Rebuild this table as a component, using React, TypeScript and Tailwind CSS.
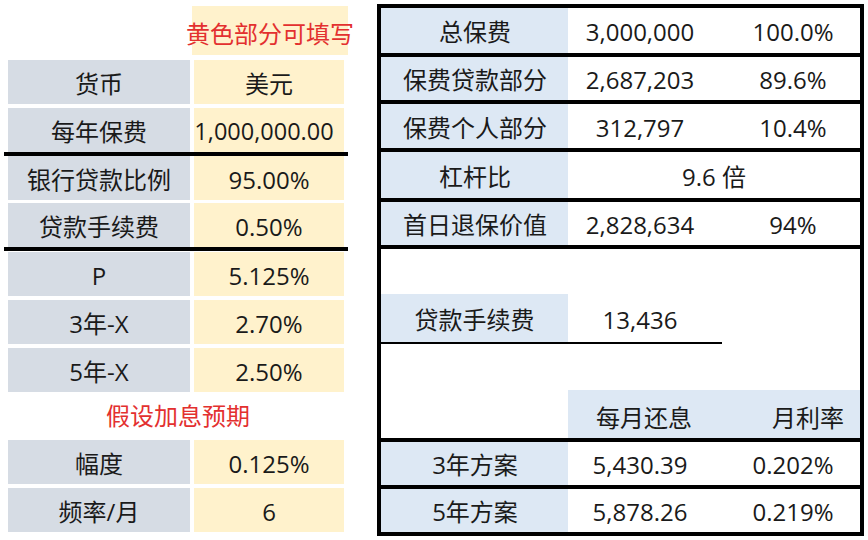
import React from "react";

const FONT = { fontFamily: "'Open Sans', 'Noto Sans CJK SC', sans-serif" };

function LRow({ label, value, valueClass = "" }: { label: string; value: string; valueClass?: string }) {
  return (
    <div className="flex h-[44px] gap-[4px]">
      <div className="flex w-[182px] items-center justify-center bg-[#d6dce4] pt-[3px]">{label}</div>
      <div className={"flex w-[150px] items-center justify-center bg-[#fff2cc] pt-[3px] " + valueClass}>{value}</div>
    </div>
  );
}

function Line({ w = "w-full", h = "h-[4px]" }: { w?: string; h?: string }) {
  return <div className={`${w} ${h} bg-black`} />;
}

function RRow({
  h,
  label,
  a,
  b,
  merged,
}: {
  h: string;
  label: string;
  a?: string;
  b?: string;
  merged?: string;
}) {
  return (
    <div className={`grid grid-cols-[187px_144px_148px] ${h}`}>
      <div className="flex items-center justify-center bg-[#dde8f4] pt-[3px] pl-[1px]">{label}</div>
      {merged ? (
        <div className="col-span-2 flex items-center justify-center pt-[3px]">{merged}</div>
      ) : (
        <>
          <div className="flex items-center justify-center pt-[3px]">{a}</div>
          <div className="flex items-center justify-center pt-[3px] pl-[14px]">{b}</div>
        </>
      )}
    </div>
  );
}

export default function App() {
  return (
    <div className="flex h-[540px] w-[868px] bg-white text-[24px] leading-none text-[#1a1a1a]" style={FONT}>
      {/* Left panel */}
      <div className="flex w-[377px] flex-col pt-[6px]">
        <div className="ml-[192px] flex h-[49px] w-[156px] items-center justify-center bg-[#fff2cc] pt-[6px]">
          <span className="whitespace-nowrap text-[#e3302f]">黄色部分可填写</span>
        </div>
        <div className="ml-[8px] flex flex-col">
          <div className="mt-[5px]">
            <LRow label="货币" value="美元" />
          </div>
          <div className="mt-[4px]">
            <LRow label="每年保费" value="1,000,000.00" valueClass="text-[23.5px] whitespace-nowrap pr-[10px]" />
          </div>
        </div>
        <div className="ml-[4px] w-[344px]">
          <Line />
        </div>
        <div className="ml-[8px] flex flex-col">
          <LRow label="银行贷款比例" value="95.00%" />
          <div className="mt-[3px]">
            <LRow label="贷款手续费" value="0.50%" />
          </div>
        </div>
        <div className="ml-[4px] w-[344px]">
          <Line />
        </div>
        <div className="ml-[8px] flex flex-col">
          <div className="mt-[1px]">
            <LRow label="P" value="5.125%" />
          </div>
          <div className="mt-[4px]">
            <LRow label="3年-X" value="2.70%" />
          </div>
          <div className="mt-[4px]">
            <LRow label="5年-X" value="2.50%" />
          </div>
          <div className="flex h-[48px] w-[340px] items-center justify-center">
            <span className="text-[#e3302f]">假设加息预期</span>
          </div>
          <LRow label="幅度" value="0.125%" />
          <div className="mt-[4px]">
            <LRow label="频率/月" value="6" />
          </div>
        </div>
      </div>

      {/* Right panel */}
      <div className="mt-[4px] flex h-[532px] w-[487px] flex-col border-4 border-black">
        <RRow h="h-[45px]" label="总保费" a="3,000,000" b="100.0%" />
        <Line />
        <RRow h="h-[43px]" label="保费贷款部分" a="2,687,203" b="89.6%" />
        <Line />
        <RRow h="h-[44px]" label="保费个人部分" a="312,797" b="10.4%" />
        <Line />
        <RRow h="h-[46px]" label="杠杆比" merged="9.6 倍" />
        <Line />
        <RRow h="h-[43px]" label="首日退保价值" a="2,828,634" b="94%" />
        <Line />
        <div className="h-[45px]" />
        <div className="grid h-[48px] grid-cols-[187px_144px_148px]">
          <div className="flex items-center justify-center bg-[#dde8f4] pt-[3px]">贷款手续费</div>
          <div className="flex items-center justify-center pt-[3px]">13,436</div>
          <div />
        </div>
        <Line w="w-[341px]" h="h-[2px]" />
        <div className="h-[46px]" />
        <div className="grid h-[48px] grid-cols-[187px_144px_148px]">
          <div />
          <div className="flex items-center justify-center bg-[#dde8f4] pt-[8px] pl-[8px]">每月还息</div>
          <div className="flex items-center justify-center bg-[#dde8f4] pt-[8px] pl-[44px]">月利率</div>
        </div>
        <Line />
        <RRow h="h-[43px]" label="3年方案" a="5,430.39" b="0.202%" />
        <Line />
        <RRow h="h-[43px]" label="5年方案" a="5,878.26" b="0.219%" />
      </div>
    </div>
  );
}
